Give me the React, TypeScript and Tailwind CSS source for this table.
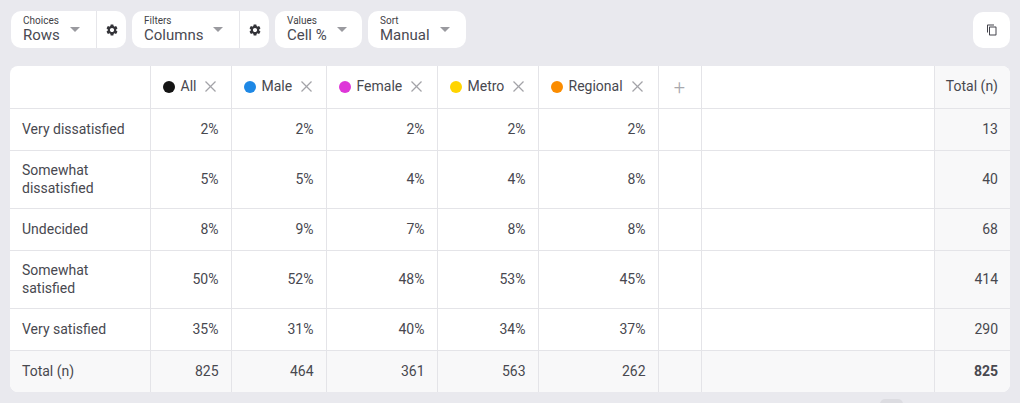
import { MdSettings, MdContentCopy } from 'react-icons/md';

type Col = { name: string; color: string; width: string };

const COLS: Col[] = [
  { name: 'All', color: '#141414', width: 'w-[81px]' },
  { name: 'Male', color: '#1e88e5', width: 'w-[95px]' },
  { name: 'Female', color: '#de36d8', width: 'w-[111px]' },
  { name: 'Metro', color: '#ffd400', width: 'w-[101px]' },
  { name: 'Regional', color: '#fb8c00', width: 'w-[120px]' },
];

const ROWS = [
  { label: 'Very dissatisfied', values: ['2%', '2%', '2%', '2%', '2%'], total: '13', tall: false },
  { label: 'Somewhat dissatisfied', values: ['5%', '5%', '4%', '4%', '8%'], total: '40', tall: true },
  { label: 'Undecided', values: ['8%', '9%', '7%', '8%', '8%'], total: '68', tall: false },
  { label: 'Somewhat satisfied', values: ['50%', '52%', '48%', '53%', '45%'], total: '414', tall: true },
  { label: 'Very satisfied', values: ['35%', '31%', '40%', '34%', '37%'], total: '290', tall: false },
];

const TOTALS = ['825', '464', '361', '563', '262'];

function Caret() {
  return <span className="ml-[10px] w-0 h-0 border-l-[5px] border-r-[5px] border-t-[5px] border-l-transparent border-r-transparent border-t-[#9a9a9f]" />;
}

function Picker({ label, value, width, gear }: { label: string; value: string; width: string; gear?: boolean }) {
  return (
    <div className="flex h-[37px] bg-white rounded-[10px]">
      <div className={`${width} flex items-center pl-[12px]`}>
        <div className="flex flex-col">
          <span className="text-[10px] leading-[11px] text-[#3f3f46]">{label}</span>
          <span className="text-[15px] leading-[19px] text-[#4a4a52]">{value}</span>
        </div>
        <Caret />
      </div>
      {gear && (
        <div className="w-[30px] border-l border-[#e6e6ea] flex items-center justify-center text-[#333338]">
          <MdSettings size={14} />
        </div>
      )}
    </div>
  );
}

function XIcon() {
  return (
    <svg width="11" height="11" viewBox="0 0 11 11" className="ml-[9px]" stroke="#a3a3a8" strokeWidth="1.3">
      <line x1="0.5" y1="0.5" x2="10.5" y2="10.5" />
      <line x1="10.5" y1="0.5" x2="0.5" y2="10.5" />
    </svg>
  );
}

export default function App() {
  const cell = 'border-r border-[#e4e4e8] px-[12px] text-right';
  return (
    <div className="w-full h-[403px] overflow-hidden bg-[#e9e9ee] px-[10px] pt-[11px] text-[14px] text-[#48484f]" style={{ fontFamily: 'Roboto, "Liberation Sans", sans-serif' }}>
      <div className="flex justify-between items-start">
        <div className="flex gap-[6px] pl-[1px]">
          <Picker label="Choices" value="Rows" width="w-[85px]" gear />
          <Picker label="Filters" value="Columns" width="w-[107px]" gear />
          <Picker label="Values" value="Cell %" width="w-[87px]" />
          <Picker label="Sort" value="Manual" width="w-[98px]" />
        </div>
        <div className="mt-[1px] w-[37px] h-[36px] bg-white rounded-[10px] flex items-center justify-center text-[#44444c]">
          <MdContentCopy size={12} />
        </div>
      </div>

      <div className="mt-[18px] bg-white rounded-[8px] overflow-hidden">
        <table className="w-[1000px] table-fixed border-collapse">
          <colgroup>
            <col className="w-[140px]" />
            {COLS.map((c) => (
              <col key={c.name} className={c.width} />
            ))}
            <col className="w-[43px]" />
            <col className="w-[233px]" />
            <col className="w-[76px]" />
          </colgroup>
          <thead>
            <tr className="h-[42px] border-b border-[#e4e4e8]">
              <th className="border-r border-[#e4e4e8]" />
              {COLS.map((c) => (
                <th key={c.name} className="border-r border-[#e4e4e8] pl-[12px] font-normal">
                  <div className="flex items-center">
                    <span className="w-[12px] h-[12px] rounded-full shrink-0" style={{ background: c.color }} />
                    <span className="ml-[6px]">{c.name}</span>
                    <XIcon />
                  </div>
                </th>
              ))}
              <th className="border-r border-[#e4e4e8] font-light text-[20px] text-[#a8a8ad]">+</th>
              <th className="border-r border-[#e4e4e8]" />
              <th className="bg-[#f8f8f9] pr-[12px] text-right font-normal">Total (n)</th>
            </tr>
          </thead>
          <tbody>
            {ROWS.map((r) => (
              <tr key={r.label} className={`${r.tall ? 'h-[58px]' : 'h-[42px]'} border-b border-[#e4e4e8]`}>
                <td className="border-r border-[#e4e4e8] px-[12px] leading-[18px] text-left">{r.label}</td>
                {r.values.map((v, i) => (
                  <td key={i} className={cell}>{v}</td>
                ))}
                <td className="border-r border-[#e4e4e8]" />
                <td className="border-r border-[#e4e4e8]" />
                <td className="bg-[#f8f8f9] px-[12px] text-right">{r.total}</td>
              </tr>
            ))}
            <tr className="h-[42px] bg-[#f8f8f9]">
              <td className="border-r border-[#e4e4e8] px-[12px] text-left">Total (n)</td>
              {TOTALS.map((v, i) => (
                <td key={i} className={cell}>{v}</td>
              ))}
              <td className="border-r border-[#e4e4e8]" />
              <td className="border-r border-[#e4e4e8]" />
              <td className="px-[12px] text-right font-bold">825</td>
            </tr>
          </tbody>
        </table>
      </div>

      <div className="flex justify-end pr-[107px] mt-[7px]">
        <div className="w-[23px] h-[10px] rounded-[5px] bg-[#dcdce1]" />
      </div>
    </div>
  );
}
